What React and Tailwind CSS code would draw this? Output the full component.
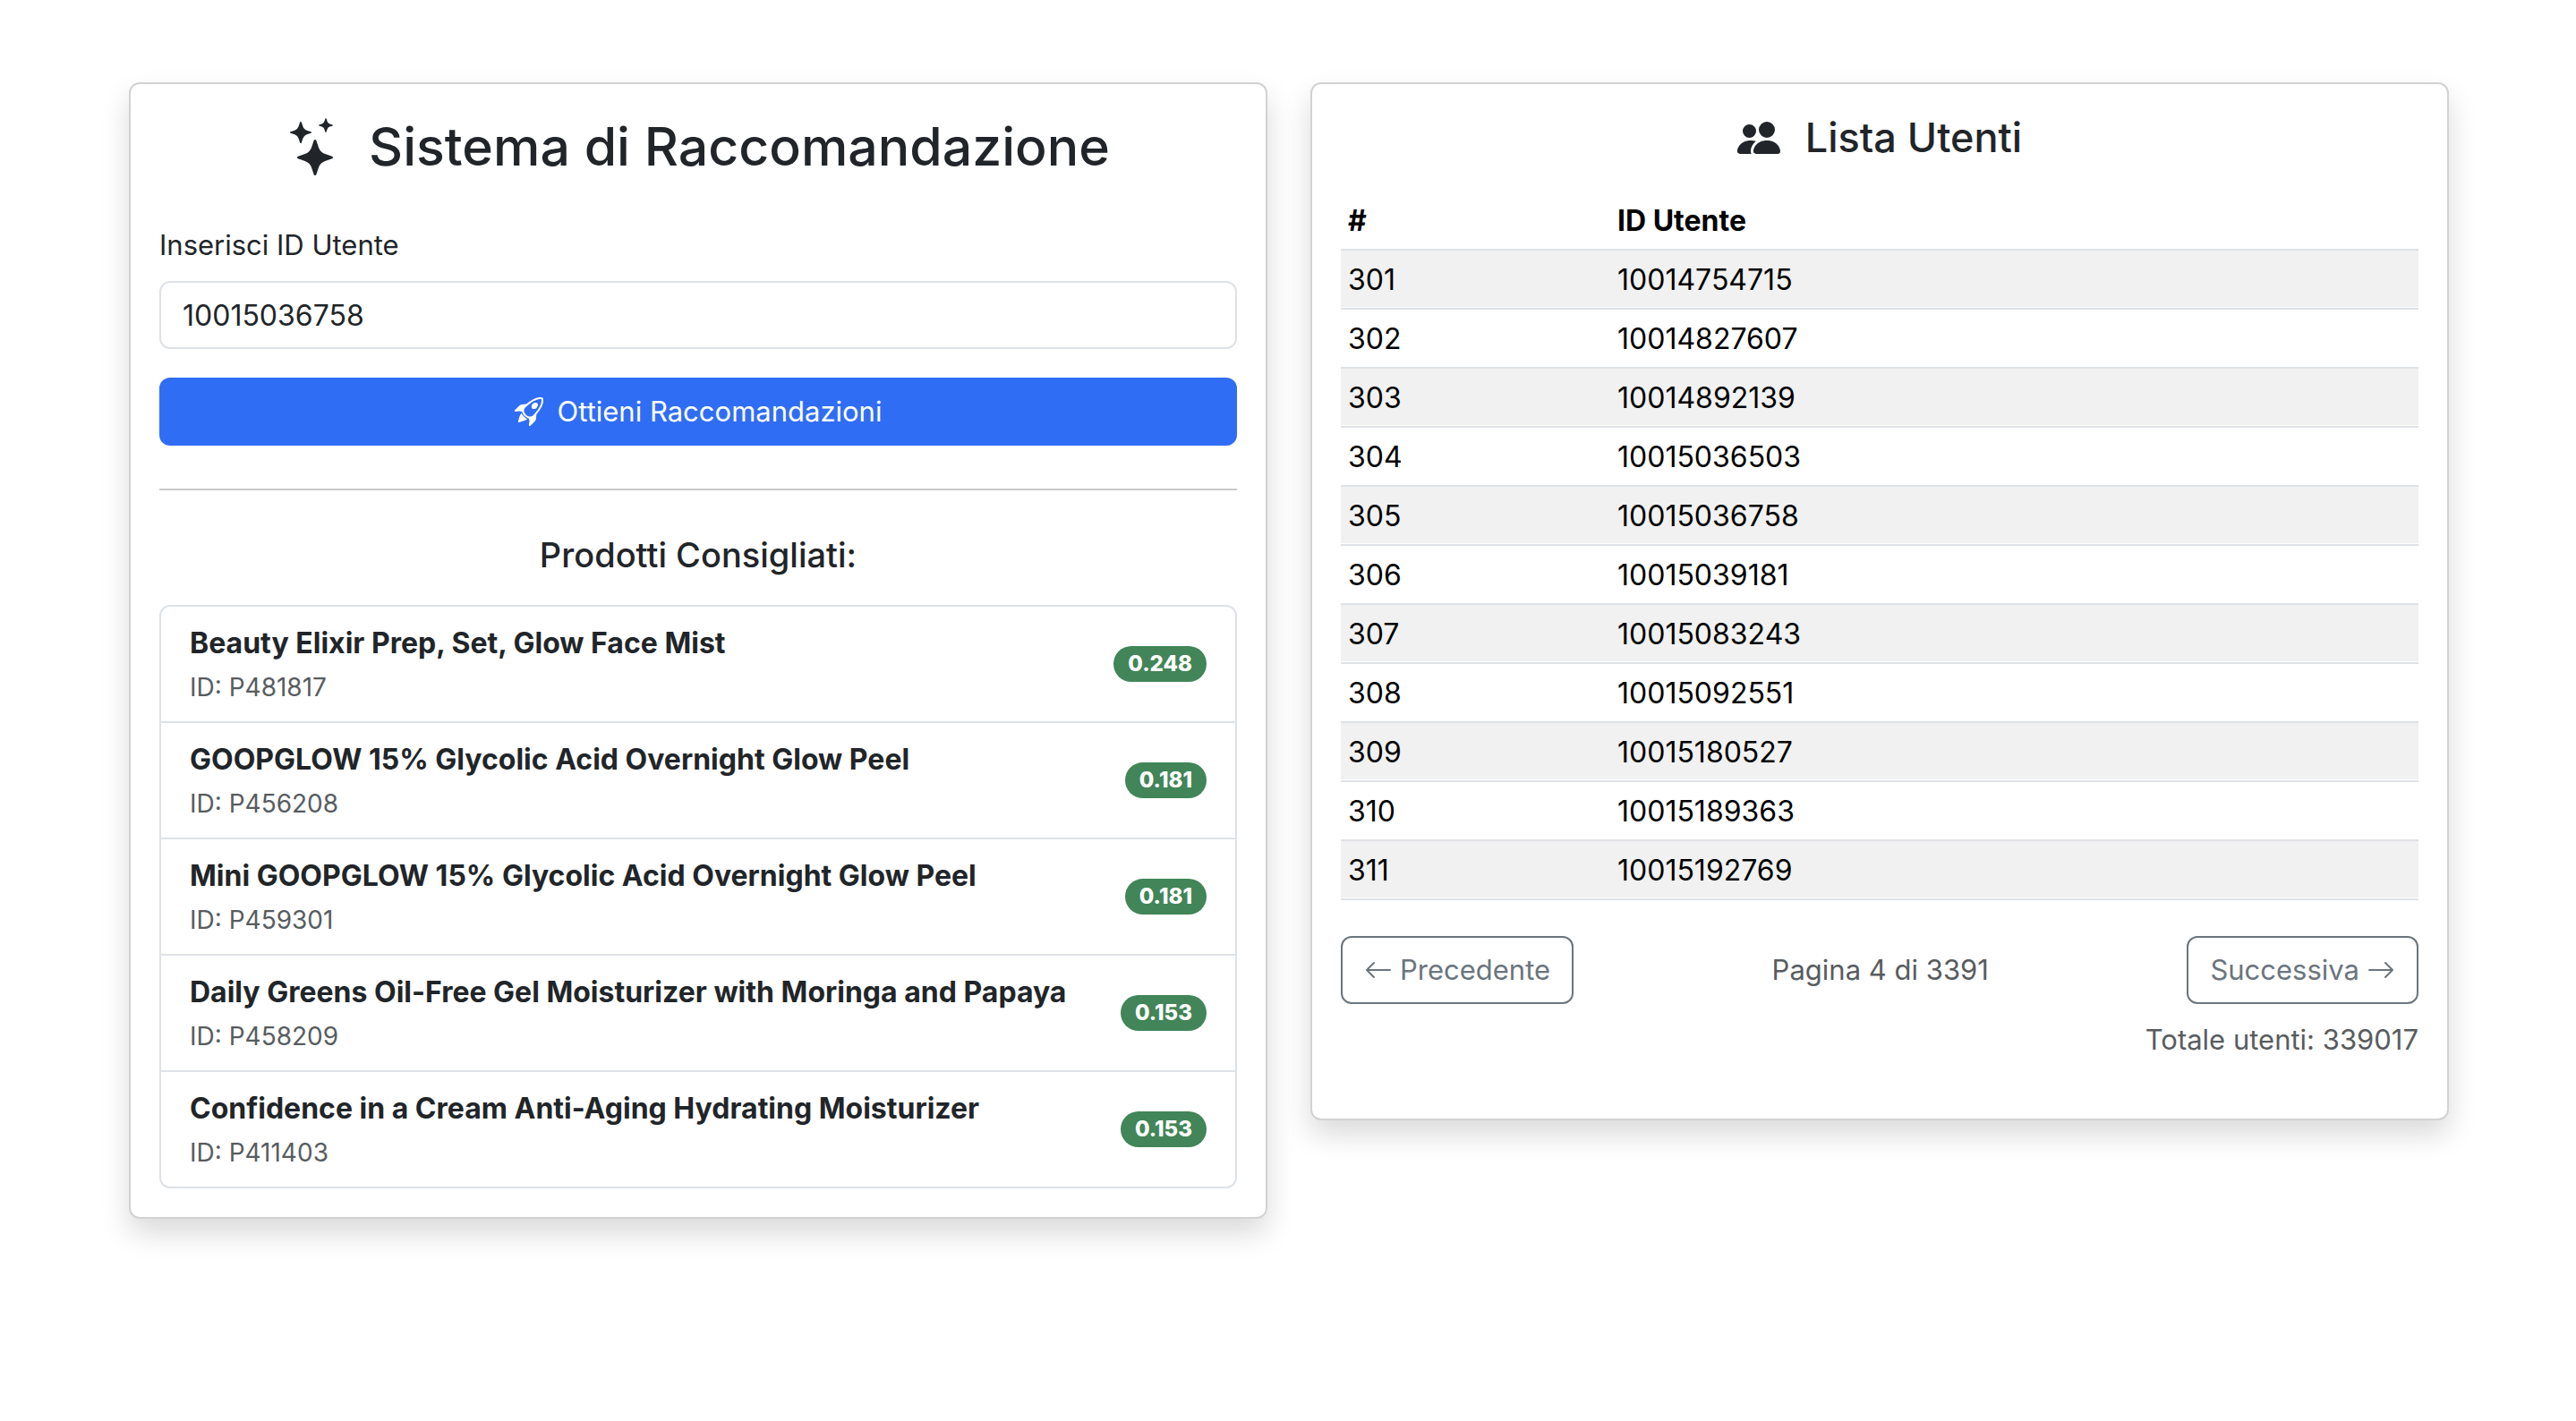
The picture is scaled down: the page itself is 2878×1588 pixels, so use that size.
import { useState } from 'react';
import { BsStars, BsPeopleFill, BsRocketTakeoff, BsArrowLeft, BsArrowRight } from 'react-icons/bs';

const products = [
  { name: 'Beauty Elixir Prep, Set, Glow Face Mist', id: 'P481817', score: '0.248' },
  { name: 'GOOPGLOW 15% Glycolic Acid Overnight Glow Peel', id: 'P456208', score: '0.181' },
  { name: 'Mini GOOPGLOW 15% Glycolic Acid Overnight Glow Peel', id: 'P459301', score: '0.181' },
  { name: 'Daily Greens Oil-Free Gel Moisturizer with Moringa and Papaya', id: 'P458209', score: '0.153' },
  { name: 'Confidence in a Cream Anti-Aging Hydrating Moisturizer', id: 'P411403', score: '0.153' },
];

const users = [
  [301, '10014754715'],
  [302, '10014827607'],
  [303, '10014892139'],
  [304, '10015036503'],
  [305, '10015036758'],
  [306, '10015039181'],
  [307, '10015083243'],
  [308, '10015092551'],
  [309, '10015180527'],
  [310, '10015189363'],
  [311, '10015192769'],
];

function Card({ children }) {
  return (
    <section className="rounded-xl border-2 border-[#d2d2d2] bg-white p-8 shadow-[0_16px_32px_rgba(0,0,0,0.15)]">
      {children}
    </section>
  );
}

function Recommendations() {
  const [userId, setUserId] = useState('10015036758');
  return (
    <Card>
      <h1 className="mb-12 flex items-center justify-center gap-7 text-[59px] leading-[76px] font-medium">
        <BsStars className="size-16 shrink-0" />
        Sistema di Raccomandazione
      </h1>
      <form onSubmit={(e) => e.preventDefault()}>
        <label htmlFor="user-id" className="mb-4 block text-[31px]">
          Inserisci ID Utente
        </label>
        <input
          id="user-id"
          type="text"
          value={userId}
          onChange={(e) => setUserId(e.target.value)}
          className="mb-8 block h-[76px] w-full rounded-xl border-2 border-[#dee2e6] px-6"
        />
        <button
          type="submit"
          className="flex h-[76px] w-full items-center justify-center gap-4 rounded-xl bg-[#306df5] text-[31px] text-white"
        >
          <BsRocketTakeoff className="size-8" />
          Ottieni Raccomandazioni
        </button>
      </form>
      <hr className="my-12 border-t-2 border-[#c8c9ca]" />
      <h2 className="mb-8 text-center text-[38px] leading-12 font-medium">Prodotti Consigliati:</h2>
      <ul className="divide-y-2 divide-[#dee2e6] rounded-xl border-2 border-[#dee2e6]">
        {products.map((p) => (
          <li key={p.id} className="flex items-center justify-between px-8">
            <div className="pt-[17px] pb-[15px]">
              <div className="font-bold">{p.name}</div>
              <div className="text-[#585c5f]">
                <small className="text-[28px] leading-8">ID: {p.id}</small>
              </div>
            </div>
            <span className="rounded-full bg-[#418558] px-4 py-2 text-2xl leading-6 font-extrabold text-white">
              {p.score}
            </span>
          </li>
        ))}
      </ul>
    </Card>
  );
}

function UserList() {
  const pagerButton =
    'flex h-[76px] items-center gap-2 rounded-xl border-2 border-[#6c757d] px-6 text-[31px] text-[#6c757d]';
  return (
    <Card>
      <h2 className="mb-8 flex items-center justify-center gap-7 text-[45px] leading-14 font-medium">
        <BsPeopleFill className="size-12 shrink-0" />
        Lista Utenti
      </h2>
      <table className="w-full border-collapse text-left text-black">
        <thead>
          <tr className="border-b-2 border-[#dee2e6]">
            <th scope="col" className="w-1/4 px-2 pt-[9px] pb-[7px] font-bold">#</th>
            <th scope="col" className="px-2 pt-[9px] pb-[7px] font-bold">ID Utente</th>
          </tr>
        </thead>
        <tbody>
          {users.map(([n, id]) => (
            <tr key={n} className="border-b-2 border-[#dee2e6] odd:bg-[#f1f1f1]">
              <td className="px-2 pt-[9px] pb-[7px] shadow-[inset_0_-1px_0_#fff]">{n}</td>
              <td className="px-2 pt-[9px] pb-[7px] shadow-[inset_0_-1px_0_#fff]">{id}</td>
            </tr>
          ))}
        </tbody>
      </table>
      <nav aria-label="Paginazione" className="mt-10 flex items-center justify-between">
        <button type="button" className={pagerButton}>
          <BsArrowLeft className="size-8" />
          Precedente
        </button>
        <span className="text-[31px] text-[#585c5f]">Pagina 4 di 3391</span>
        <button type="button" className={pagerButton}>
          Successiva
          <BsArrowRight className="size-8" />
        </button>
      </nav>
      <p className="mt-4 mb-8 text-right text-[31px] text-[#585c5f]">Totale utenti: 339017</p>
    </Card>
  );
}

export default function App() {
  return (
    <main className="grid min-h-screen grid-cols-2 items-start gap-12 bg-white pt-[92px] pr-[142px] pb-12 pl-36 font-['Inter',sans-serif] text-[32px] leading-12 text-[#212529]">
      <Recommendations />
      <UserList />
    </main>
  );
}
